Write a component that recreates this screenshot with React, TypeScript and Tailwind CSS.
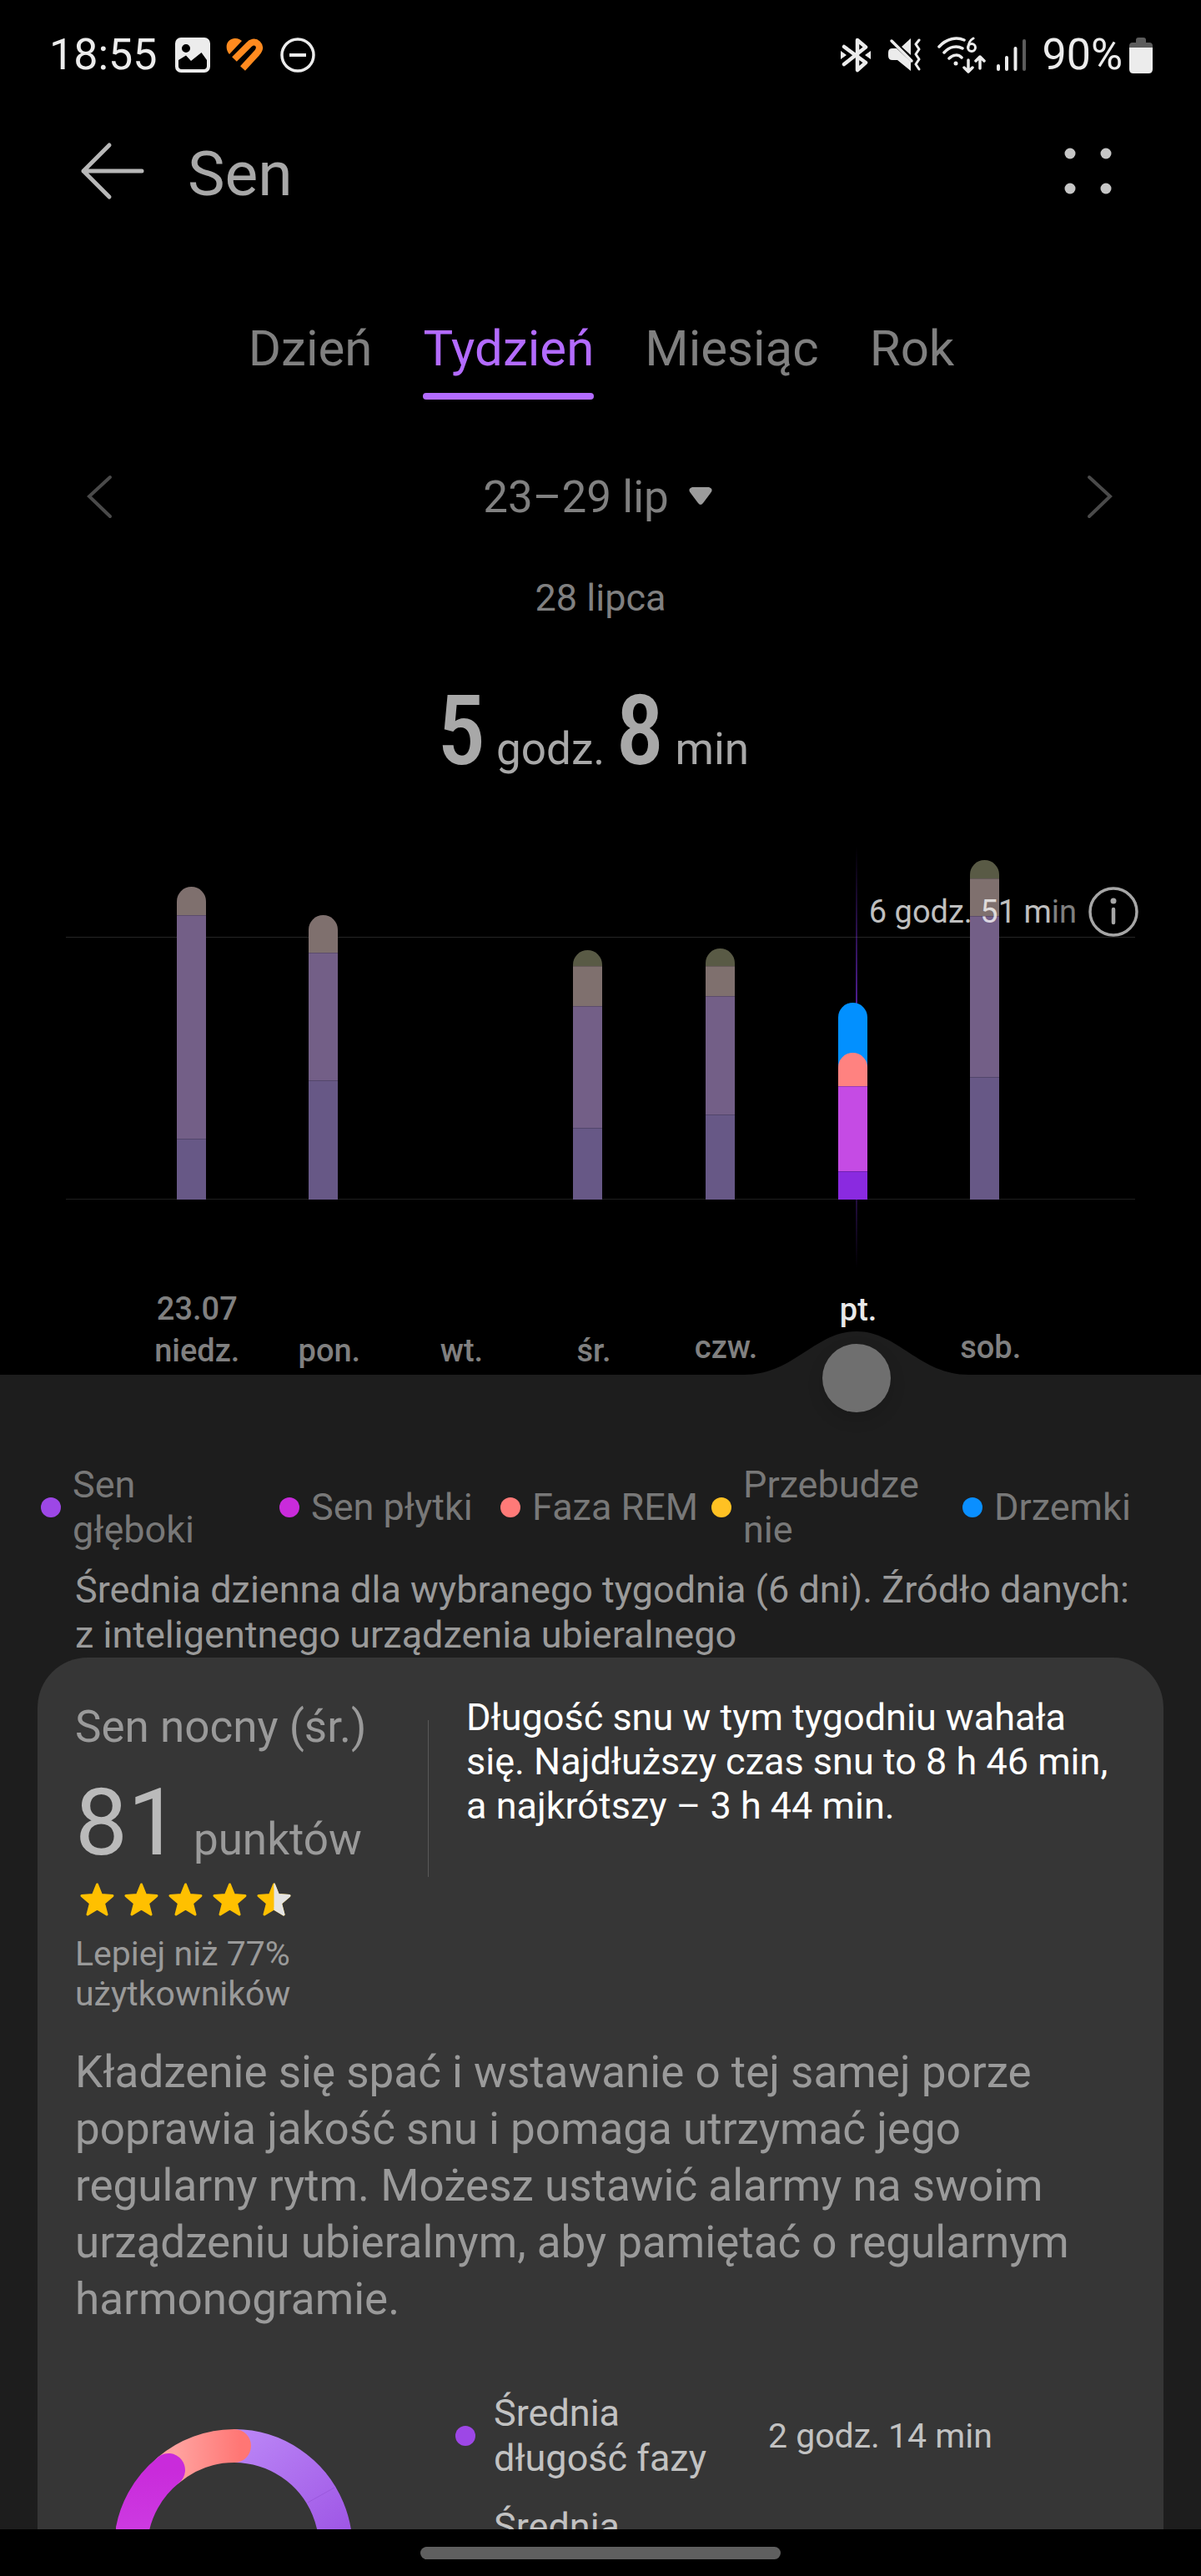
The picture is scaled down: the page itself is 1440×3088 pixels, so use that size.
import { useState } from "react"
import clsx from "clsx"

const TABS = ["Dzień", "Tydzień", "Miesiąc", "Rok"]

// segment heights in px, listed from the top of the bar to the bottom
const DAYS = [
  { label: "niedz.", date: "23.07", lift: "pb-1", segments: { rem: 34, light: 268, deep: 73 } },
  { label: "pon.", lift: "pb-1", segments: { rem: 45, light: 153, deep: 143 } },
  { label: "wt.", lift: "pb-1", segments: {} },
  { label: "śr.", lift: "pb-1", segments: { awake: 19, rem: 48, light: 146, deep: 86 } },
  { label: "czw.", lift: "pb-2", segments: { awake: 21, rem: 36, light: 142, deep: 102 } },
  { label: "pt.", lift: "pb-[53px]", selected: true, segments: { rem: 40, light: 102, deep: 34 } },
  { label: "sob.", lift: "pb-2", segments: { awake: 22, rem: 45, light: 193, deep: 147 } },
]

const DIM_COLORS: Record<string, string> = {
  awake: "bg-[#595a45]",
  rem: "bg-[#7f706e]",
  light: "bg-[#735f87]",
  deep: "bg-[#675886]",
}

const ACTIVE_COLORS: Record<string, string> = {
  awake: "bg-[#ffc123]",
  rem: "bg-[#ff8280]",
  light: "bg-[#c54be4]",
  deep: "bg-[#8a2ae0]",
}

const LEGEND = [
  { lines: ["Sen", "głęboki"], color: "bg-[#9d47e6]" },
  { lines: ["Sen płytki"], color: "bg-[#c92bdb]" },
  { lines: ["Faza REM"], color: "bg-[#ff7a78]" },
  { lines: ["Przebudze", "nie"], color: "bg-[#ffc123]" },
  { lines: ["Drzemki"], color: "bg-[#0a8fff]" },
]

const StatusBar = () => (
  <div className="flex h-[132px] shrink-0 items-center justify-between pl-[59px] pr-[58px] text-[52px] leading-[62px] text-[#ececec]">
    <div className="flex items-center">
      <span>18:55</span>
      <svg className="ml-[21px]" width="42" height="42" viewBox="0 0 42 42">
        <path
          fill="#ececec"
          fillRule="evenodd"
          d="M7 0h28a7 7 0 0 1 7 7v28a7 7 0 0 1-7 7H7a7 7 0 0 1-7-7V7a7 7 0 0 1 7-7ZM13 8a5 5 0 1 0 0 10a5 5 0 0 0 0-10ZM4 27v7q0 4 4 4h26q4 0 4-4v-7l-6.500-9L19 28l-6-6.500Z"
        />
      </svg>
      <svg className="ml-[18px]" width="47" height="42" viewBox="0 0 47 42">
        <path fill="#ff8a1f" d="M5 20C-1 13 1 2 11 1c4-.5 7 1 9 3Z" />
        <path
          d="M11 26 28 9c3-3.500 7.500-5 11-1.500s2 7.500-1 11L21 37"
          fill="none"
          stroke="#ff8a1f"
          strokeWidth="8"
        />
      </svg>
      <svg className="ml-[18px]" width="44" height="44" viewBox="0 0 44 44" fill="none" stroke="#ececec">
        <circle cx="22" cy="22" r="19" strokeWidth="3.500" />
        <path d="M12 22h20" strokeWidth="4" />
      </svg>
    </div>
    <div className="flex items-center">
      <svg width="38" height="44" viewBox="0 0 38 44">
        <path
          d="M5 12 31 31 21 40V4l10 8.500L5 33"
          fill="none"
          stroke="#ececec"
          strokeWidth="4.500"
          strokeLinecap="round"
          strokeLinejoin="round"
        />
        <path fill="#ececec" d="M1 17l7 5-7 5ZM37 17l-7 5 7 5Z" />
      </svg>
      <svg className="ml-[20px]" width="40" height="40" viewBox="0 0 40 40">
        <path fill="#ececec" d="M27 0v20L16 10ZM0 17q0-5 5-5h5L27 28v11L11 26H5q-5 0-5-5Z" />
        <path d="m4 3 24 24" stroke="#ececec" strokeWidth="3.500" strokeLinecap="round" />
        <path
          d="m37 2-4 5 4 6-4 6 4 6-4 6 4 6"
          fill="none"
          stroke="#ececec"
          strokeWidth="3"
          strokeLinecap="round"
          strokeLinejoin="round"
        />
      </svg>
      <svg className="ml-[19px]" width="58" height="44" viewBox="0 0 58 44" fill="none" stroke="#ececec" strokeLinecap="round">
        <path d="M2 12C11 2 23 0 32 4M8 19C14 12 23 10 30 14M14 26c5-5 11-5 15-1" strokeWidth="3.500" />
        <circle cx="22" cy="32" r="2.500" fill="#ececec" stroke="none" />
        <path d="M43 2c-4 2-6 7-6 11" strokeWidth="3" />
        <circle cx="41" cy="13" r="4.500" strokeWidth="3" />
        <path d="M37 28v13m-5-4 5 5 5-5M51 38V24m-5 5 5-5 5 5" strokeWidth="3.500" strokeLinejoin="round" />
      </svg>
      <svg className="ml-[12px]" width="37" height="40" viewBox="0 0 37 40" strokeWidth="4" strokeLinecap="round">
        <path d="M3 33v4M13 23v14M23.500 12v25" stroke="#ececec" />
        <path d="M34 3v34" stroke="#5c5c5c" />
      </svg>
      <span className="ml-[18px]">90%</span>
      <svg className="ml-[8px]" width="28" height="43" viewBox="0 0 28 43">
        <path fill="#5c5c5c" d="M8 3q0-3 3-3h6q3 0 3 3v3h4q4 0 4 4v3H0v-3q0-4 4-4h4Z" />
        <path fill="#ececec" d="M0 12h28v26q0 5-5 5H5q-5 0-5-5Z" />
      </svg>
    </div>
  </div>
)

const Header = () => (
  <header className="flex h-[146px] shrink-0 items-center pl-[96px] pr-[106px]">
    <button type="button" aria-label="Wstecz">
      <svg width="78" height="70" viewBox="0 0 78 70" fill="none" stroke="#b8b8b8" strokeWidth="5" strokeLinecap="round">
        <path d="M74 35H4M35 4 4 35l31 31" strokeLinejoin="round" />
      </svg>
    </button>
    <h1 className="ml-[51px] flex-1 pt-[6px] text-[75px] leading-[88px] text-[#a8a8a8]">Sen</h1>
    <button type="button" aria-label="Menu">
      <svg width="58" height="56" viewBox="0 0 58 56" fill="#c6c6c6">
        <circle cx="7" cy="7" r="6.500" />
        <circle cx="50" cy="7" r="6.500" />
        <circle cx="7" cy="49" r="6.500" />
        <circle cx="50" cy="49" r="6.500" />
      </svg>
    </button>
  </header>
)

const PeriodTabs = () => {
  const [active, setActive] = useState("Tydzień")

  return (
    <div role="tablist" className="mt-[104px] flex justify-center gap-[61px] pl-[2px]">
      {TABS.map((tab) => (
        <button
          key={tab}
          type="button"
          role="tab"
          aria-selected={tab === active}
          onClick={() => setActive(tab)}
          className={clsx(
            "flex flex-col gap-[17px] text-[60px] leading-[72px]",
            tab === active ? "text-[#b36bff]" : "text-[#808080]"
          )}
        >
          {tab}
          <span className={clsx("h-2 w-full rounded-full", tab === active && "bg-[#b36bff]")} />
        </button>
      ))}
    </div>
  )
}

const DateNav = () => (
  <div className="mt-[81px] flex h-[72px] items-center justify-between pl-[103px] pr-[105px]">
    <button type="button" aria-label="Poprzedni tydzień">
      <svg width="33" height="56" viewBox="0 0 33 56" fill="none" stroke="#4a4a4a" strokeWidth="4" strokeLinecap="round">
        <path d="M29 4 4 27l25 24" />
      </svg>
    </button>
    <div className="flex items-center gap-[24px] pr-[5px]">
      <select
        aria-label="Zakres dat"
        className="field-sizing-content appearance-none bg-transparent text-[53px] leading-[64px] text-[#808080]"
      >
        <option>23–29 lip</option>
      </select>
      <svg width="28" height="24" viewBox="0 0 28 24">
        <path fill="#9c9c9c" d="M4 0h20q6 2 2 7L17 19q-3 4-6 0L2 7Q-2 2 4 0Z" />
      </svg>
    </div>
    <button type="button" aria-label="Następny tydzień">
      <svg width="33" height="56" viewBox="0 0 33 56" fill="none" stroke="#4a4a4a" strokeWidth="4" strokeLinecap="round">
        <path d="m4 4 25 23L4 51" />
      </svg>
    </button>
  </div>
)

const SleepChart = () => (
  <section className="mt-[81px]">
    <div className="relative h-[423px]">
      <div className="absolute left-[79px] right-[79px] top-[108px] h-px bg-[#262626]" />
      <div className="absolute bottom-0 left-[79px] right-[79px] h-px bg-[#1e1e1e]" />
      <div className="absolute inset-x-0 top-0 flex h-[505px] pl-[155px] pr-[175px]">
        <div className="ml-[calc(100%*11/14)] w-[2px] -translate-x-1/2 bg-linear-to-b from-transparent via-[#6a28c4] to-transparent" />
      </div>
      <div className="relative grid h-full grid-cols-7 items-end justify-items-center pl-[150px] pr-[180px]">
        {DAYS.map(({ label, selected, segments }) => (
          <div key={label} className={clsx("w-[35px]", selected && "rounded-t-full bg-[#0290ff] pt-[60px]")}>
            <div className="flex flex-col overflow-hidden rounded-t-full">
              {Object.entries(segments).map(([phase, height]) => (
                <div
                  key={phase}
                  style={{ height }}
                  className={clsx(
                    "border-t border-black/20 first:border-t-0",
                    selected ? ACTIVE_COLORS[phase] : DIM_COLORS[phase]
                  )}
                />
              ))}
            </div>
          </div>
        ))}
      </div>
      <div className="absolute right-[75px] top-[48px] flex items-center gap-[14px]">
        <p className="text-[38px] leading-[44px] text-white/75">
          6 godz. 51 m<span className="text-white/50">in</span>
        </p>
        <button type="button" aria-label="Informacje">
          <svg width="60" height="60" viewBox="0 0 60 60" fill="none" stroke="#a6a6a6" strokeLinecap="round">
            <circle cx="30" cy="30" r="28" strokeWidth="3.500" />
            <path d="M30 27v16" strokeWidth="4.500" />
            <circle cx="30" cy="17" r="3.500" fill="#a6a6a6" stroke="none" />
          </svg>
        </button>
      </div>
    </div>

    <div className="relative h-[210px]">
      <div className="absolute bottom-0 left-[155px] right-[175px] flex">
        <svg className="ml-[calc(100%*11/14)] max-w-none shrink-0 -translate-x-1/2" width="270" height="52" viewBox="0 0 270 52">
          <path fill="#1d1d1d" d="M0 52C60 52 85 0 135 0s75 52 135 52Z" />
        </svg>
      </div>
      <div className="relative grid h-full grid-cols-7 items-end pl-[157px] pr-[173px]">
        {DAYS.map(({ label, date, lift, selected }) => (
          <p
            key={label}
            className={clsx(
              "text-center text-[38px] font-medium leading-[50px]",
              lift,
              selected ? "text-[#e8e8e8]" : "text-[#808080]"
            )}
          >
            {date && <span className="block">{date}</span>}
            {label}
          </p>
        ))}
      </div>
      <div className="absolute -bottom-[45px] left-[155px] right-[175px] flex h-[82px]">
        <input
          type="range"
          min={0}
          max={6}
          defaultValue={5}
          aria-label="Dzień tygodnia"
          className="ml-[calc(100%/14-41px)] h-[82px] w-[calc(100%*6/7+82px)] appearance-none bg-transparent [&::-webkit-slider-thumb]:size-[82px] [&::-webkit-slider-thumb]:appearance-none [&::-webkit-slider-thumb]:rounded-full [&::-webkit-slider-thumb]:bg-[#6f6f6f] [&::-webkit-slider-thumb]:shadow-[0_8px_20px_rgba(0,0,0,0.12)]"
        />
      </div>
    </div>
  </section>
)

const STAR_PATH =
  "M26.500 8 31.500 20.500 45 21.500 34.500 30.500 38 44 26.500 37 15 44 18.500 30.500 8 21.500 21.500 20.500Z"

const Star = ({ half = false }: { half?: boolean }) => (
  <svg width="53" height="53" viewBox="0 0 53 53" strokeWidth="3" strokeLinejoin="round">
    <path d={STAR_PATH} fill="#ffc000" stroke="#ffc000" />
    {half && (
      <>
        <clipPath id="right-half">
          <rect x="26.500" width="27" height="53" />
        </clipPath>
        <path d={STAR_PATH} fill="#e4e4e4" stroke="#e4e4e4" clipPath="url(#right-half)" />
      </>
    )}
  </svg>
)

const PhaseDonut = () => (
  <svg className="ml-[49px] mt-[46px] shrink-0" width="284" height="284" viewBox="0 0 284 284" fill="none" strokeWidth="40">
    <defs>
      <linearGradient id="deep" x1="142" y1="0" x2="270" y2="150" gradientUnits="userSpaceOnUse">
        <stop stopColor="#bc88f7" />
        <stop offset="1" stopColor="#9c52e4" />
      </linearGradient>
      <linearGradient id="rem" x1="70" y1="0" x2="150" y2="0" gradientUnits="userSpaceOnUse">
        <stop stopColor="#ffa3a0" />
        <stop offset="1" stopColor="#ff7674" />
      </linearGradient>
      <linearGradient id="light" x1="0" y1="50" x2="0" y2="284" gradientUnits="userSpaceOnUse">
        <stop stopColor="#c92bdb" />
        <stop offset="1" stopColor="#d65cf0" />
      </linearGradient>
    </defs>
    <path d="M142 20a122 122 0 0 1 86 208" stroke="url(#deep)" />
    <path d="m230 88 32-18" stroke="#9a58dd" strokeWidth="1" />
    <path d="M63 49A122 122 0 0 1 142 20" stroke="url(#rem)" strokeLinecap="round" />
    <path d="M228 228A122 122 0 1 1 63 49" stroke="url(#light)" strokeLinecap="round" />
  </svg>
)

const SummaryCard = () => (
  <article className="mx-[45px] rounded-t-[60px] bg-[#363636] px-[45px] pt-[45px]">
    <div className="flex">
      <div className="w-[423px] shrink-0 pt-[7px] text-[#9a9a9a]">
        <h2 className="text-[53px] leading-[62px]">Sen nocny (śr.)</h2>
        <p className="mt-[28px] text-[53px] leading-[62px]">
          <span className="mr-[16px] text-[112px] leading-[112px] text-[#bababa]">81</span>punktów
        </p>
        <div role="img" aria-label="4,5 gwiazdki" className="mt-[10px] flex">
          <Star />
          <Star />
          <Star />
          <Star />
          <Star half />
        </div>
        <p className="mt-[14px] text-[41px] leading-[48px]">Lepiej niż 77% użytkowników</p>
      </div>
      <div className="mt-[30px] h-[188px] w-px bg-[#585858]" />
      <p className="ml-[45px] flex-1 text-[45px] leading-[53px] text-white">
        Długość snu w tym tygodniu wahała się. Najdłuższy czas snu to 8 h 46 min, a najkrótszy – 3 h 44 min.
      </p>
    </div>

    <p className="mt-[36px] text-[53px] leading-[68px] text-[#9a9a9a]">
      Kładzenie się spać i wstawanie o tej samej porze poprawia jakość snu i pomaga utrzymać jego regularny
      rytm. Możesz ustawić alarmy na swoim urządzeniu ubieralnym, aby pamiętać o regularnym harmonogramie.
    </p>

    <div className="mt-[76px] flex">
      <PhaseDonut />
      <ul className="ml-[123px] flex flex-1 flex-col gap-[28px] text-[45px] leading-[54px] text-[#c2c2c2]">
        <li className="flex items-center">
          <span className="size-6 shrink-0 rounded-full bg-[#9d47e6]" />
          <span className="ml-[22px] w-[305px]">Średnia długość fazy</span>
          <span className="ml-[24px] text-[41px]">2 godz. 14 min</span>
        </li>
        <li className="pl-[46px]">Średnia</li>
      </ul>
    </div>
  </article>
)

export default function App() {
  return (
    <div className="flex h-screen flex-col overflow-hidden bg-black font-['Roboto',sans-serif]">
      <StatusBar />
      <Header />
      <main className="min-h-0 flex-1 overflow-hidden">
        <PeriodTabs />
        <DateNav />
        <p className="mt-[58px] text-center text-[45px] leading-[54px] text-[#808080]">28 lipca</p>
        <p className="mt-[74px] pr-[18px] text-center text-[53px] leading-[62px] text-[#a8a8a8]">
          <span className="font-['Roboto_Condensed','Roboto',sans-serif] text-[116px] font-medium leading-[116px]">5</span> godz.{" "}
          <span className="font-['Roboto_Condensed','Roboto',sans-serif] text-[116px] font-medium leading-[116px]">8</span> min
        </p>
        <SleepChart />
        <div className="bg-[#1d1d1d] pt-[105px]">
          <ul className="grid grid-cols-[286fr_265fr_253fr_301fr_286fr] pl-[49px] text-[45px] leading-[54px] text-[#787878]">
            {LEGEND.map(({ lines, color }) => (
              <li key={lines[0]} className="flex items-center gap-[14px] whitespace-nowrap">
                <span className={clsx("size-6 shrink-0 rounded-full", color)} />
                <span>
                  {lines.map((line) => (
                    <span key={line} className="block">
                      {line}
                    </span>
                  ))}
                </span>
              </li>
            ))}
          </ul>
          <p className="mt-[18px] pl-[90px] pr-[80px] text-[45px] leading-[54px] text-[#9a9a9a]">
            Średnia dzienna dla wybranego tygodnia (6 dni). Źródło danych: z inteligentnego urządzenia ubieralnego
          </p>
          <SummaryCard />
        </div>
      </main>
      <div className="flex h-[56px] shrink-0 items-center justify-center bg-black">
        <div className="h-[15px] w-[432px] rounded-full bg-[#5f5f5f]" />
      </div>
    </div>
  )
}
